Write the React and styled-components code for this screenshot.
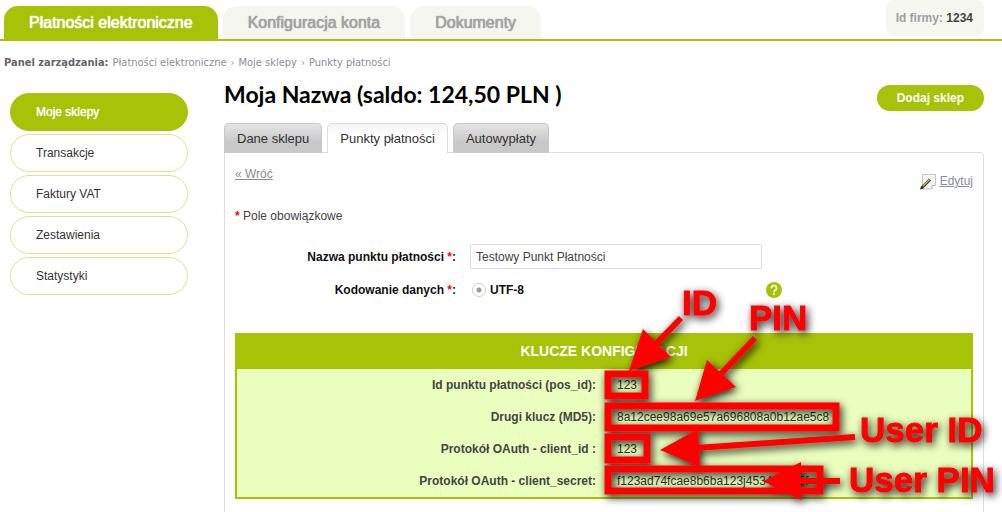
import React from "react";
import styled, { createGlobalStyle } from "styled-components";

const green = "#a6c307";
const sans = `"Liberation Sans", Arial, Helvetica, sans-serif`;
const tahoma = `"DejaVu Sans Condensed", "DejaVu Sans", Tahoma, sans-serif`;

const GlobalStyle = createGlobalStyle`
  * { box-sizing: border-box; }
  body {
    margin: 0;
    background: #fff;
    color: #444;
    font-family: ${sans};
    font-size: 12px;
    line-height: 18px;
  }
`;

const Page = styled.div`
  min-height: 100vh;
  display: flex;
  flex-direction: column;
  overflow: hidden;
`;

const TopBar = styled.header`
  display: flex;
  justify-content: space-between;
  align-items: flex-start;
  padding: 0 18px 0 4px;
  border-bottom: 2px solid ${green};
`;

const MainNav = styled.nav`
  display: flex;
  gap: 5px;
  padding-top: 6px;
`;

const MainTab = styled.a`
  height: 33px;
  padding: 0 25px;
  border-radius: 14px 14px 0 0;
  background: ${(p) => (p.$active ? green : "#f5f6f0")};
  color: ${(p) => (p.$active ? "#fff" : "#a3a3a3")};
  font-size: 16px;
  line-height: 33px;
  text-decoration: none;
  text-shadow: 0 0 1px currentColor, 0 0 1px currentColor;
`;

const CompanyId = styled.div`
  padding: 9px 11px 9px 10px;
  border-radius: 8px;
  background: #f5f6f0;
  color: #a0a0a0;
  font-weight: bold;

  strong { color: #444; }
`;

const Breadcrumb = styled.nav`
  display: flex;
  gap: 4px;
  padding: 12px 4px 9px;
  color: #8c8f96;
  font-family: ${tahoma};
  font-size: 11px;
  line-height: 20px;

  a { color: inherit; text-decoration: none; }
  strong { color: #666; }
  span { color: #8fa3cc; }
`;

const Columns = styled.div`
  flex: 1;
  display: flex;
  gap: 36px;
  padding: 0 18px 0 10px;
`;

const SideMenu = styled.nav`
  width: 178px;
  flex: none;
  display: flex;
  flex-direction: column;
  gap: 3px;
  padding-top: 11px;
`;

const SideItem = styled.a`
  height: 38px;
  padding: 0 25px;
  border: 1px solid ${(p) => (p.$active ? green : "#d7e596")};
  border-radius: 19px;
  background: ${(p) => (p.$active ? green : "#fff")};
  color: ${(p) => (p.$active ? "#fff" : "#333")};
  line-height: 36px;
  text-decoration: none;
  text-shadow: ${(p) => (p.$active ? "0 0 1px #fff" : "none")};
`;

const Main = styled.main`
  flex: 1;
  min-width: 0;
  display: flex;
  flex-direction: column;
`;

const TitleRow = styled.div`
  display: flex;
  justify-content: space-between;
  height: 29px;
`;

const Title = styled.h1`
  margin: 0;
  color: #000;
  font-family: Lato, "Trebuchet MS", sans-serif;
  font-size: 23px;
  font-weight: bold;
  line-height: 24px;
`;

const AddButton = styled.button`
  align-self: flex-end;
  height: 26px;
  padding: 0 20px;
  border: 0;
  border-radius: 13px;
  background: ${green};
  color: #fff;
  font: bold 12px ${sans};
`;

const ShopTabs = styled.div`
  display: flex;
  gap: 5px;
  margin: 12px 0 -1px;
`;

const ShopTab = styled.button`
  position: relative;
  height: 30px;
  padding: 0 12px;
  border: 1px solid ${(p) => (p.$active ? "#ddd" : "#c8c8c8")};
  border-bottom: 0;
  border-radius: 5px 5px 0 0;
  background: ${(p) =>
    p.$active
      ? "linear-gradient(#f4f4f4, #fff 12px)"
      : "linear-gradient(#e4e4e4, #c8c8c8 18px)"};
  color: #333;
  font: 13px ${sans};
`;

const Panel = styled.section`
  flex: 1;
  padding: 12px 10px;
  border: 1px solid #ddd;
  border-bottom: 0;
  border-radius: 0 5px 0 0;
`;

const PanelLinks = styled.div`
  display: flex;
  justify-content: space-between;
  height: 25px;

  a { color: #8b8d92; }
`;

const EditLink = styled.div`
  align-self: flex-end;
  display: flex;
  align-items: center;
  gap: 4px;
`;

const Required = styled.span`
  color: #f00;
  font-weight: bold;
`;

const Hint = styled.p`
  margin: 17px 0 19px;
`;

const Form = styled.form`
  display: grid;
  grid-template-columns: 235px 292px 20px;
  grid-template-rows: 25px 22px;
  row-gap: 10px;
  align-items: center;
`;

const FieldLabel = styled.label`
  padding-right: 14px;
  color: #111;
  font-weight: bold;
  text-align: right;
`;

const TextInput = styled.input`
  width: 100%;
  height: 25px;
  padding: 0 5px;
  border: 1px solid #ddd;
  border-radius: 2px;
  color: #444;
  font: 12px ${sans};
`;

const RadioLabel = styled.label`
  display: flex;
  align-items: center;
  gap: 4px;
  padding-left: 2px;
  color: #111;
  font-weight: bold;
`;

const Radio = styled.input`
  appearance: none;
  width: 14px;
  height: 14px;
  margin: 0;
  border: 1px solid #ccc;
  border-radius: 50%;
  background: radial-gradient(circle, #999 2px, #fff 3px);
`;

const HelpButton = styled.button`
  width: 16px;
  height: 16px;
  margin-left: 4px;
  padding: 0;
  border: 0;
  border-radius: 50%;
  background: ${green};
  color: #fff;
  font: bold 13px/16px ${sans};
`;

const KeysArea = styled.div`
  position: relative;
  margin-top: 32px;
`;

const KeysTable = styled.table`
  width: 100%;
  table-layout: fixed;
  border-collapse: separate;
  border-spacing: 0;
  border: 2px solid ${green};
  border-top: 0;
  background: #eaffbd;

  thead th {
    height: 36px;
    padding: 0;
    background: ${green};
    color: #fff;
    font-size: 14px;
    text-align: center;
  }
  tbody th {
    height: 32px;
    padding: 0 8px;
    text-align: right;
  }
  td {
    padding: 0 13px;
    color: #333;
  }
`;

const Notes = styled.svg`
  position: absolute;
  top: -50px;
  left: 50%;
  overflow: visible;
  pointer-events: none;
  font: bold 35px ${sans};
`;

const keys = [
  ["Id punktu płatności (pos_id):", "123"],
  ["Drugi klucz (MD5):", "8a12cee98a69e57a696808a0b12ae5c8"],
  ["Protokół OAuth - client_id :", "123"],
  ["Protokół OAuth - client_secret:", "f123ad74fcae8b6ba123j4534bc785f"],
];

const frames = [
  { y: 91, w: 37, h: 22 },
  { y: 123, w: 228, h: 22 },
  { y: 154, w: 39, h: 23 },
  { y: 186, w: 212, h: 22 },
];

const arrows = [
  { head: "25,88 39,46 67,74", shaft: "M77 35L50 63" },
  { head: "91,118 103,77 132,104", shaft: "M151 55L114 94" },
  { head: "56,167 94,146 96,184", shaft: "M251 154L92 165" },
  { head: "159,198 197,179 197,217", shaft: "M236 198H195" },
];

const captions = [
  { x: 78, y: 32, text: "ID" },
  { x: 145, y: 47, text: "PIN" },
  { x: 256, y: 159, text: "User ID" },
  { x: 245, y: 209, text: "User PIN" },
];

function EditIcon() {
  return (
    <svg width="16" height="17" viewBox="0 0 16 17" aria-hidden="true">
      <path d="M2.5 1.5H15.5V12L11.5 16H2.5Z" fill="#f5f6f7" stroke="#c3c7cc" />
      <path d="M15.5 12.5H12V16" fill="#fff" stroke="#b5b9be" />
      <path d="M2 14.5L10 6.5" stroke="#333" strokeWidth="3" />
      <path d="M3 13L9.5 6.5" stroke="#d5b646" strokeWidth="1.4" />
      <path d="M0 16.5L1 13.5L3.5 15.5Z" fill="#222" />
    </svg>
  );
}

function HelpIcon() {
  return (
    <svg width="16" height="16" viewBox="0 0 16 16" fill="none" aria-hidden="true">
      <path d="M5.5 6.2A2.5 2.5 0 1 1 9.3 8.2C8.4 8.8 8 9.2 8 10.2" stroke="#fff" strokeWidth="1.6" />
      <path d="M7.1 11.3H8.9V13H7.1Z" fill="#fff" />
    </svg>
  );
}

function Annotations() {
  return (
    <Notes width="392" height="220" fill="#f00">
      <defs>
        <filter id="shade" x="-10%" y="-10%" width="120%" height="125%">
          <feDropShadow dx="2" dy="3" stdDeviation="4" floodColor="#000" floodOpacity="0.9" />
        </filter>
      </defs>
      <g filter="url(#shade)">
        {frames.map((f) => (
          <rect key={f.y} x="4" y={f.y} width={f.w} height={f.h} fill="none" stroke="#f00" strokeWidth="7" />
        ))}
        {arrows.map((a) => (
          <g key={a.head}>
            <path d={a.shaft} stroke="#f00" strokeWidth="6" />
            <polygon points={a.head} />
          </g>
        ))}
        {captions.map((c) => (
          <text key={c.text} x={c.x} y={c.y} stroke="#f00" strokeWidth="1">{c.text}</text>
        ))}
      </g>
    </Notes>
  );
}

export default function App() {
  return (
    <Page>
      <GlobalStyle />
      <TopBar>
        <MainNav>
          <MainTab href="#platnosci" $active>Płatności elektroniczne</MainTab>
          <MainTab href="#konto">Konfiguracja konta</MainTab>
          <MainTab href="#dokumenty">Dokumenty</MainTab>
        </MainNav>
        <CompanyId>Id firmy: <strong>1234</strong></CompanyId>
      </TopBar>

      <Breadcrumb>
        <strong>Panel zarządzania:</strong>
        <a href="#platnosci">Płatności elektroniczne</a>
        <span>›</span>
        <a href="#sklepy">Moje sklepy</a>
        <span>›</span>
        <a href="#punkty">Punkty płatności</a>
      </Breadcrumb>

      <Columns>
        <SideMenu>
          <SideItem href="#sklepy" $active>Moje sklepy</SideItem>
          <SideItem href="#transakcje">Transakcje</SideItem>
          <SideItem href="#faktury">Faktury VAT</SideItem>
          <SideItem href="#zestawienia">Zestawienia</SideItem>
          <SideItem href="#statystyki">Statystyki</SideItem>
        </SideMenu>

        <Main>
          <TitleRow>
            <Title>Moja Nazwa (saldo: 124,50 PLN )</Title>
            <AddButton type="button">Dodaj sklep</AddButton>
          </TitleRow>

          <ShopTabs>
            <ShopTab type="button">Dane sklepu</ShopTab>
            <ShopTab type="button" $active>Punkty płatności</ShopTab>
            <ShopTab type="button">Autowypłaty</ShopTab>
          </ShopTabs>

          <Panel>
            <PanelLinks>
              <a href="#wroc">« Wróć</a>
              <EditLink>
                <EditIcon />
                <a href="#edytuj">Edytuj</a>
              </EditLink>
            </PanelLinks>

            <Hint><Required>*</Required> Pole obowiązkowe</Hint>

            <Form>
              <FieldLabel htmlFor="name">
                Nazwa punktu płatności <Required>*</Required>:
              </FieldLabel>
              <TextInput id="name" type="text" defaultValue="Testowy Punkt Płatności" />
              <span />
              <FieldLabel as="span">
                Kodowanie danych <Required>*</Required>:
              </FieldLabel>
              <RadioLabel>
                <Radio type="radio" name="encoding" defaultChecked />
                UTF-8
              </RadioLabel>
              <HelpButton type="button" aria-label="Pomoc"><HelpIcon /></HelpButton>
            </Form>

            <KeysArea>
              <KeysTable>
                <thead>
                  <tr><th colSpan={2}>KLUCZE KONFIGURACJI</th></tr>
                </thead>
                <tbody>
                  {keys.map(([label, value]) => (
                    <tr key={label}>
                      <th scope="row">{label}</th>
                      <td>{value}</td>
                    </tr>
                  ))}
                </tbody>
              </KeysTable>
              <Annotations />
            </KeysArea>
          </Panel>
        </Main>
      </Columns>
    </Page>
  );
}
